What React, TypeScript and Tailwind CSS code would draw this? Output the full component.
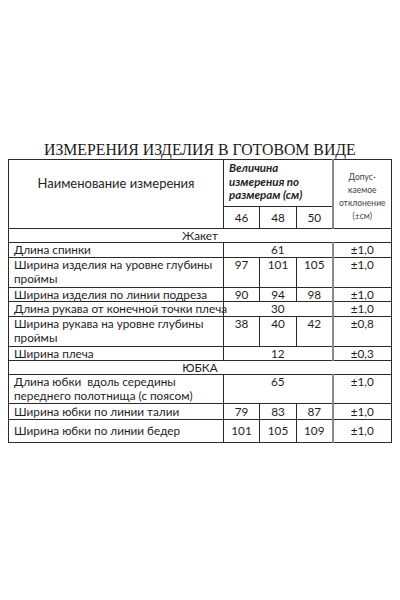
import React from 'react';

type Row = {
  name: string[];
  values: string[];
  tol: string;
  h: string;
};

const jacket: Row[] = [
  { name: ['Длина спинки'], values: ['61'], tol: '±1,0', h: 'h-[15px]' },
  { name: ['Ширина изделия на уровне глубины', 'проймы'], values: ['97', '101', '105'], tol: '±1,0', h: 'h-[30px]' },
  { name: ['Ширина изделия по линии подреза'], values: ['90', '94', '98'], tol: '±1,0', h: 'h-[14px]' },
  { name: ['Длина рукава от конечной точки плеча'], values: ['30'], tol: '±1,0', h: 'h-[15px]' },
  { name: ['Ширина рукава на уровне глубины', 'проймы'], values: ['38', '40', '42'], tol: '±0,8', h: 'h-[30px]' },
  { name: ['Ширина плеча'], values: ['12'], tol: '±0,3', h: 'h-[14px]' },
];

const skirt: Row[] = [
  { name: ['Длина юбки  вдоль середины', 'переднего полотнища (с поясом)'], values: ['65'], tol: '±1,0', h: 'h-[29px]' },
  { name: ['Ширина юбки по линии талии'], values: ['79', '83', '87'], tol: '±1,0', h: 'h-[16px]' },
  { name: ['Ширина юбки по линии бедер'], values: ['101', '105', '109'], tol: '±1,0', h: 'h-[23px]' },
];

const cell = 'border border-[#2a2a2a] p-0';
const tolCell = 'border border-[#2a2a2a] border-l-2 border-l-[#8a8a8a] p-0 text-center';

const DataRow: React.FC<{ row: Row }> = ({ row }) => {
  const multi = row.name.length > 1;
  const align = multi ? 'align-top leading-[14px]' : 'align-middle';
  return (
    <tr className={row.h}>
      <td className={`${cell} ${align} pl-[5px] whitespace-nowrap`}>
        {row.name.map((line) => (
          <div key={line} className="whitespace-pre">{line}</div>
        ))}
      </td>
      {row.values.length === 1 ? (
        <td colSpan={3} className={`${cell} ${align} text-center`}>{row.values[0]}</td>
      ) : (
        row.values.map((v, i) => (
          <td key={i} className={`${cell} ${align} text-center`}>{v}</td>
        ))
      )}
      <td className={`${tolCell} ${align}`}>{row.tol}</td>
    </tr>
  );
};

const SectionRow: React.FC<{ label: string }> = ({ label }) => (
  <tr className="h-[14px]">
    <td colSpan={5} className={`${cell} text-center align-middle`}>{label}</td>
  </tr>
);

export default function App() {
  return (
    <div className="w-[400px] h-[600px] bg-white text-[#1e1e1e] overflow-hidden">
      <div className="pt-[141px] pl-[44px] text-[15.8px] leading-[18px] text-[#1a1a1a] whitespace-nowrap font-['Liberation_Serif',serif]">
        ИЗМЕРЕНИЯ ИЗДЕЛИЯ В ГОТОВОМ ВИДЕ
      </div>
      <table className="ml-[8px] w-[383px] table-fixed border-collapse text-[11.75px] leading-[12px] font-['Lato','Liberation_Sans',sans-serif]">
        <colgroup>
          <col className="w-[215px]" />
          <col className="w-[36px]" />
          <col className="w-[37px]" />
          <col className="w-[36px]" />
          <col className="w-[59px]" />
        </colgroup>
        <tbody>
          <tr className="h-[47px]">
            <td rowSpan={2} className={`${cell} align-top text-center pt-[16px] text-[13px] leading-[14px]`}>
              Наименование измерения
            </td>
            <td colSpan={3} className={`${cell} align-top pl-[5px] pt-[1px] font-bold italic text-[11.5px] leading-[13.5px]`}>
              Величина
              <br />
              измерения по
              <br />
              размерам (см)
            </td>
            <td rowSpan={2} className={`${tolCell} align-middle text-[8.5px] leading-[13px] text-[#444] pt-[5px]`}>
              Допус-
              <br />
              каемое
              <br />
              отклонение
              <br />
              (±см)
            </td>
          </tr>
          <tr className="h-[22px]">
            <td className={`${cell} text-center align-middle`}>46</td>
            <td className={`${cell} text-center align-middle`}>48</td>
            <td className={`${cell} text-center align-middle`}>50</td>
          </tr>
          <SectionRow label="Жакет" />
          {jacket.map((r) => (
            <DataRow key={r.name[0]} row={r} />
          ))}
          <SectionRow label="ЮБКА" />
          {skirt.map((r) => (
            <DataRow key={r.name[0]} row={r} />
          ))}
        </tbody>
      </table>
    </div>
  );
}
